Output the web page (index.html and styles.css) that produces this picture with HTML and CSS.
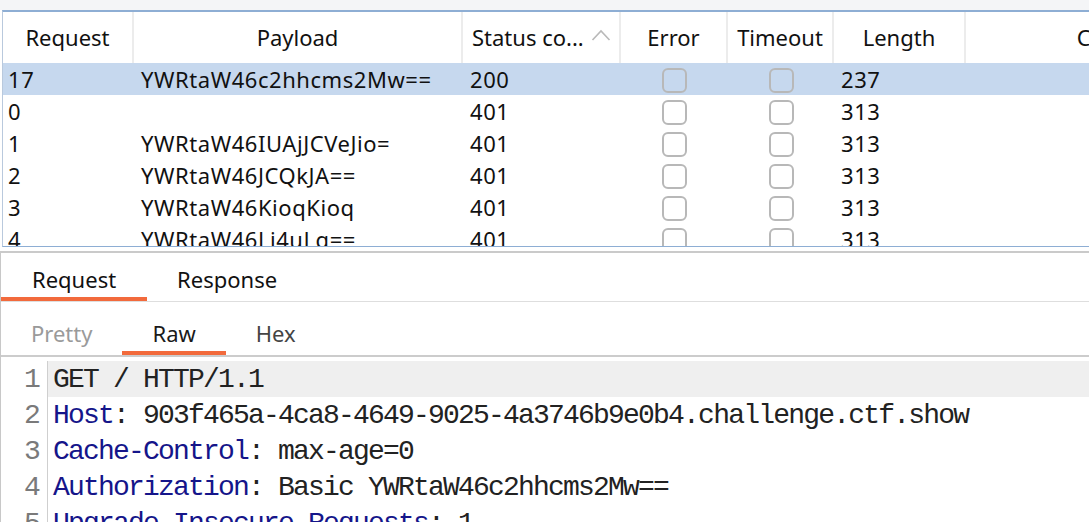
FILE: index.html
```html
<!DOCTYPE html>
<html>
<head>
<meta charset="utf-8">
<link rel="stylesheet" href="styles.css">
</head>
<body>
<div class="top-strip"></div>
<div class="results">
  <div class="grid header">
    <div class="hcell">Request</div>
    <div class="hcell">Payload</div>
    <div class="hcell status"><span>Status co...</span><svg class="sort" width="20" height="12" viewBox="0 0 20 12"><polyline points="1.5,11 10,2 18.5,11" fill="none" stroke="#b9b9b9" stroke-width="1.6"/></svg></div>
    <div class="hcell">Error</div>
    <div class="hcell">Timeout</div>
    <div class="hcell">Length</div>
    <div class="hcell last">Comment</div>
  </div>
  <div class="grid row selected">
    <div class="cell first">17</div><div class="cell">YWRtaW46c2hhcms2Mw==</div><div class="cell">200</div>
    <div class="cell box"><span class="cb"></span></div><div class="cell box"><span class="cb"></span></div>
    <div class="cell">237</div><div class="cell"></div>
  </div>
  <div class="grid row">
    <div class="cell first">0</div><div class="cell"></div><div class="cell">401</div>
    <div class="cell box"><span class="cb"></span></div><div class="cell box"><span class="cb"></span></div>
    <div class="cell">313</div><div class="cell"></div>
  </div>
  <div class="grid row">
    <div class="cell first">1</div><div class="cell">YWRtaW46IUAjJCVeJio=</div><div class="cell">401</div>
    <div class="cell box"><span class="cb"></span></div><div class="cell box"><span class="cb"></span></div>
    <div class="cell">313</div><div class="cell"></div>
  </div>
  <div class="grid row">
    <div class="cell first">2</div><div class="cell">YWRtaW46JCQkJA==</div><div class="cell">401</div>
    <div class="cell box"><span class="cb"></span></div><div class="cell box"><span class="cb"></span></div>
    <div class="cell">313</div><div class="cell"></div>
  </div>
  <div class="grid row">
    <div class="cell first">3</div><div class="cell">YWRtaW46KioqKioq</div><div class="cell">401</div>
    <div class="cell box"><span class="cb"></span></div><div class="cell box"><span class="cb"></span></div>
    <div class="cell">313</div><div class="cell"></div>
  </div>
  <div class="grid row">
    <div class="cell first">4</div><div class="cell">YWRtaW46Li4uLg==</div><div class="cell">401</div>
    <div class="cell box"><span class="cb"></span></div><div class="cell box"><span class="cb"></span></div>
    <div class="cell">313</div><div class="cell"></div>
  </div>
</div>
<div class="splitter"></div>
<div class="detail">
  <div class="tabs">
    <div class="tab active">Request</div>
    <div class="tab">Response</div>
  </div>
  <div class="subtabs">
    <div class="subtab muted">Pretty</div>
    <div class="subtab active">Raw</div>
    <div class="subtab hex">Hex</div>
  </div>
  <div class="editor">
    <div class="line current"><span class="num">1</span><span class="code">GET / HTTP/1.1</span></div>
    <div class="line"><span class="num">2</span><span class="code"><span class="key">Host</span>: 903f465a-4ca8-4649-9025-4a3746b9e0b4.challenge.ctf.show</span></div>
    <div class="line"><span class="num">3</span><span class="code"><span class="key">Cache-Control</span>: max-age=0</span></div>
    <div class="line"><span class="num">4</span><span class="code"><span class="key">Authorization</span>: Basic YWRtaW46c2hhcms2Mw==</span></div>
    <div class="line"><span class="num">5</span><span class="code"><span class="key">Upgrade-Insecure-Requests</span>: 1</span></div>
  </div>
</div>
</body>
</html>
```
FILE: styles.css
```css
* { box-sizing: border-box; }
html, body { margin: 0; padding: 0; background: #fff; }
body {
  width: 1089px;
  height: 522px;
  overflow: hidden;
  font-family: "Noto Sans", "Open Sans", sans-serif;
  font-size: 22px;
  color: #111;
}
.top-strip { height: 10px; background: #f4f5f7; }
.results {
  height: 237px;
  margin-left: 2px;
  border-top: 2px solid #8eaed4;
  border-left: 1px solid #b9c9dd;
  border-bottom: 1px solid #8eaed4;
  overflow: hidden;
}
.grid {
  display: grid;
  grid-template-columns: 131px 329px 158px 107px 106px 132px 324px;
}
.header { height: 51px; background: #fff; }
.hcell {
  display: flex;
  align-items: center;
  justify-content: center;
  border-right: 2px solid #ececec;
  padding-bottom: 2px;
  white-space: nowrap;
}
.hcell.last { border-right: none; }
.hcell.status { justify-content: space-between; padding: 0 8px 2px 9px; }
.sort { margin-top: -4px; }
.row { height: 32px; }
.row.selected { background: #c6d8ee; }
.cell {
  display: flex;
  align-items: center;
  padding-left: 7px;
  white-space: nowrap;
  line-height: 1;
  letter-spacing: 0.55px;
}
.cell.first { padding-left: 5px; }
.cell.box { justify-content: center; padding-left: 0; padding-top: 1px; }
.cb {
  width: 25px;
  height: 25px;
  border: 2px solid #b8b8b8;
  border-radius: 6px;
  margin-top: 2px;
}
.splitter { height: 6px; border-bottom: 2px solid #cacaca; }
.detail { border-left: 1px solid #c8c8c8; }
.tabs {
  display: flex;
  height: 49px;
  border-bottom: 1px solid #dedede;
}
.tab {
  padding: 7px 31px 0;
  display: flex;
  align-items: center;
  border-bottom: 4px solid transparent;
}
.tab.active { border-bottom-color: #f26a3c; }
.tabs .tab:nth-child(2) { padding-left: 30px; }
.subtabs {
  display: flex;
  height: 55px;
  border-bottom: 2px solid #cccccc;
}
.subtab {
  padding: 12px 30px 0;
  display: flex;
  align-items: center;
  border-bottom: 4px solid transparent;
  color: #1a1a1a;
}
.subtab.muted { color: #9a9a9a; }
.subtab.hex { color: #444; }
.subtab.active { border-bottom-color: #f26a3c; }
.editor {
  padding-top: 4px;
  font-family: "Liberation Mono", "DejaVu Sans Mono", monospace;
  font-size: 28px;
  letter-spacing: -1.8px;
}
.line {
  display: flex;
  height: 36px;
  align-items: center;
  white-space: pre;
}
.num {
  width: 47px;
  flex: none;
  text-align: right;
  padding-right: 8px;
  color: #7a7a7a;
  border-right: 1px solid #cfcfcf;
  height: 36px;
  line-height: 38px;
}
.code {
  flex: 1;
  height: 36px;
  line-height: 38px;
  padding-left: 5px;
  color: #222;
}
.line.current .code { background: #efefef; }
.key { color: #15158a; }
```
